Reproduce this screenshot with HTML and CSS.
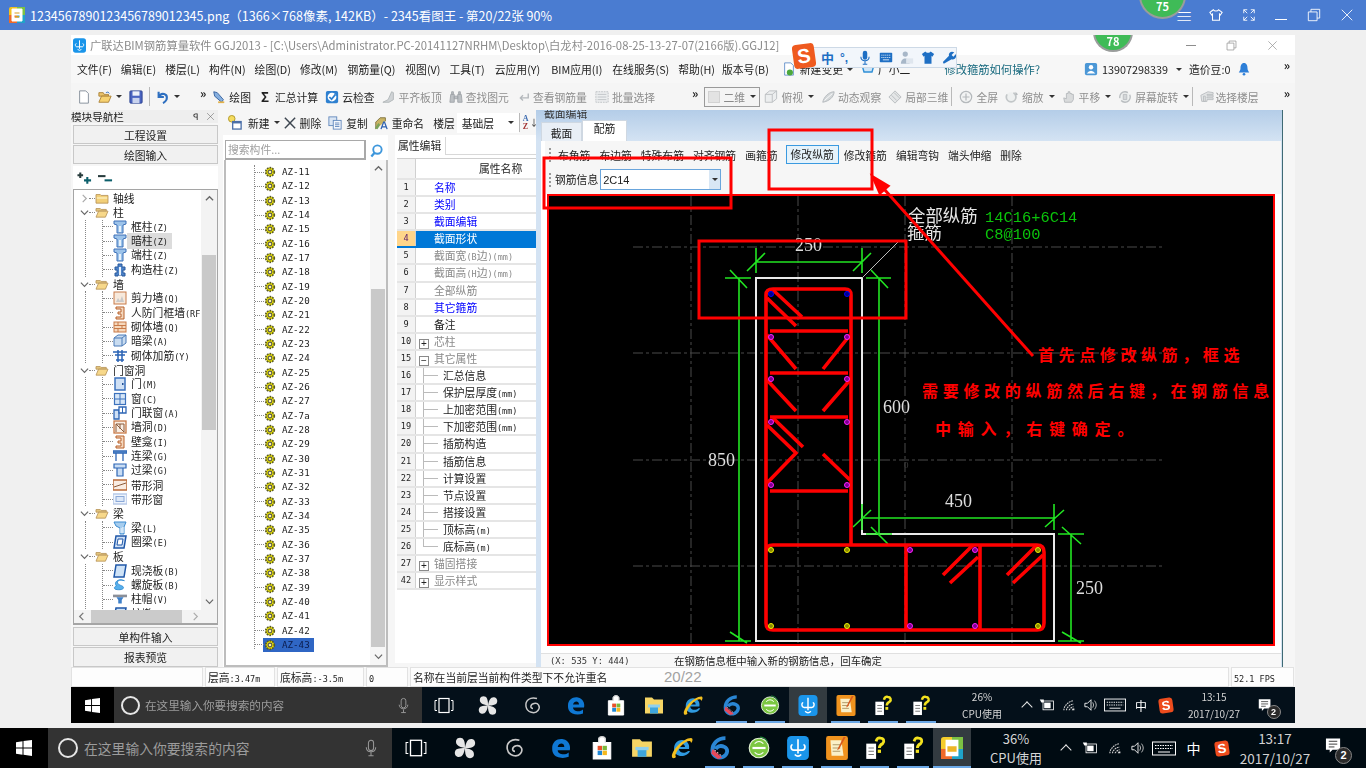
FILE: index.html
```html
<!DOCTYPE html>
<html lang="zh-CN">
<head>
<meta charset="utf-8">
<title>2345看图王</title>
<link rel="stylesheet" href="styles.css">
</head>
<body>
<svg class="sprite" width="0" height="0" aria-hidden="true"><defs>
<symbol id="viewer" viewBox="0 0 16 16"><rect x="0" y="0" width="16" height="16" rx="2" fill="#f3c21f"/><rect x="0" y="8" width="8" height="8" fill="#ee6a2a"/><rect x="8" y="8" width="8" height="8" fill="#1fa3c9"/><rect x="8" y="0" width="8" height="8" fill="#7cc243"/><path d="M3 2v12h10V2M3 2h10M5 5h6M5 8h6v3H5z" fill="#fff" stroke="#fff"/><path d="M5.500 5.500h5v1h-5zM6 9h4v1.500H6z" fill="#d8a020"/></symbol>
<symbol id="folder" viewBox="0 0 16 14"><path d="M1 3h5l1 1h8v9H1z" fill="#f2cf78" stroke="#b8955a"/><path d="M2 6h12v2H2z" fill="#fbe9b0"/></symbol>
<symbol id="folderopen" viewBox="0 0 16 14"><path d="M1 3h5l1 1h6v2H1z" fill="#e6c87e" stroke="#b8955a"/><path d="M1 13l3-7h11l-3 7z" fill="#f7d88a" stroke="#b8955a"/></symbol>
<symbol id="col" viewBox="0 0 14 14"><path d="M1 1h12v3l-3 1v8H4V5L1 4z" fill="#9cc3ea" stroke="#3d70b8"/><path d="M6 6h2v6H6z" fill="#e8f2fb"/></symbol>
<symbol id="colx" viewBox="0 0 14 14"><path d="M5 1h4v3h3v3h-2v3h2v3H9v-1H5v1H2v-3h2V7H2V4h3z" fill="#4d82c8" stroke="#2b5a9d"/><path d="M6 4h2v8H6z" fill="#e8f2fb"/></symbol>
<symbol id="wall" viewBox="0 0 14 14"><rect x="1" y="1" width="12" height="12" fill="#f7e9dc" stroke="#c87a48"/><path d="M3 11l2-4 2 3 2-5 2 6z" fill="#c9c9c9"/></symbol>
<symbol id="frame" viewBox="0 0 14 14"><path d="M3 1h8v12H3v-2h5V8H5V6h3V3H3z" fill="#f4d7bd" stroke="#b8602a"/></symbol>
<symbol id="brick" viewBox="0 0 14 14"><rect x="1" y="2" width="12" height="10" fill="#f6d8bc" stroke="#c87a48"/><path d="M1 5.500h12M1 8.500h12M5 2v3.500M9 5.500v3M5 8.500V12" stroke="#c87a48" fill="none"/></symbol>
<symbol id="beam3d" viewBox="0 0 14 14"><path d="M1 4l4-3h8v8l-4 3H1z" fill="#c9dcf0" stroke="#4b7bb8"/><path d="M1 4h8v8M9 4l4-3" fill="none" stroke="#4b7bb8"/></symbol>
<symbol id="rebar" viewBox="0 0 14 14"><path d="M0 3h14M2 6h10M5 1v12M9 1v12M3 11h8" stroke="#2a63b5" stroke-width="1.500" fill="none"/></symbol>
<symbol id="door" viewBox="0 0 14 14"><rect x="2" y="1" width="10" height="12" fill="#cfe0f5" stroke="#3c72bd" stroke-width="1.500"/><rect x="9" y="6" width="1.500" height="2" fill="#1f4f96"/></symbol>
<symbol id="win" viewBox="0 0 14 14"><rect x="1.500" y="1.500" width="11" height="11" fill="#d6e6f7" stroke="#3c72bd" stroke-width="1.200"/><path d="M7 1.500v11M1.500 7h11" stroke="#3c72bd"/></symbol>
<symbol id="dw" viewBox="0 0 14 14"><path d="M1 4h5v9H1z" fill="#cfe0f5" stroke="#2e66b5" stroke-width="1.300"/><path d="M6 1h7v6H6z" fill="#fff" stroke="#2e66b5" stroke-width="1.300"/><path d="M9.500 1v6" stroke="#2e66b5"/></symbol>
<symbol id="hole" viewBox="0 0 14 14"><rect x="1" y="1" width="12" height="12" fill="#f9eee4" stroke="#c87a48" stroke-width="1.300"/><path d="M3 12V4h8v8M3 4l8 8M7 4v5" fill="none" stroke="#8a5a3a"/></symbol>
<symbol id="lbeam" viewBox="0 0 14 14"><path d="M0 2h14v2H0zM3 4v8M10 4v8" fill="#8fb8e6" stroke="#2e66b5" stroke-width="1.300"/></symbol>
<symbol id="tbeam" viewBox="0 0 14 14"><path d="M1 1h12v4H1zM4 5h6v8H4z" fill="#c9ddf4" stroke="#2e66b5" stroke-width="1.200"/></symbol>
<symbol id="band" viewBox="0 0 14 14"><rect x="0" y="2" width="14" height="10" fill="#f9ece2" stroke="#b96a38" stroke-width="1.500"/><path d="M1 9l12-4" stroke="#8a5a3a"/></symbol>
<symbol id="bandw" viewBox="0 0 14 14"><rect x="0" y="2" width="14" height="10" fill="#eef4fc" stroke="#b7c9e8" stroke-width="1.500"/><rect x="3" y="4.500" width="8" height="5" fill="#dbe7f7" stroke="#8aa8d8"/></symbol>
<symbol id="beam" viewBox="0 0 14 14"><path d="M1 1h12l-2 5v7H7V7L3 5z" fill="#a6cdee" stroke="#3b8bd0"/><path d="M8 7v5M10 6v6" stroke="#fff"/></symbol>
<symbol id="ring" viewBox="0 0 14 14"><path d="M3 1h10l-2 12H1z" fill="#cfe0f5" stroke="#1f57a8" stroke-width="1.500"/><path d="M5 4h5l-1 6H4z" fill="#fff" stroke="#1f57a8"/></symbol>
<symbol id="slab" viewBox="0 0 14 14"><path d="M3 1h10l-2 12H1z" fill="#cfe3f7" stroke="#1f57a8" stroke-width="1.500"/></symbol>
<symbol id="spiral" viewBox="0 0 16 14"><path d="M13 2C7 0 3 3 6 6c3 2 6 2 6 4s-4 3-9 2C1 11 1 9 4 8c-3-3 0-7 5-7z" fill="#58b0ec" stroke="#2e8ad0"/></symbol>
<symbol id="cap" viewBox="0 0 16 14"><path d="M0 2h16v3H0z" fill="#8a8f98"/><path d="M4 5h8l-2 3v4H6V8z" fill="#3d7fc9"/></symbol>
<symbol id="gear" viewBox="0 0 14 14"><circle cx="7" cy="7" r="5" fill="#e7df00" stroke="#5a5a20" stroke-width="2" stroke-dasharray="2 1.200"/><circle cx="7" cy="7" r="2.200" fill="#fff7a0" stroke="#555" stroke-width="1.300"/></symbol>
<symbol id="page" viewBox="0 0 14 16"><path d="M2 1h7l3 3v11H2z" fill="#fff" stroke="#7d8794"/></symbol>
<symbol id="open" viewBox="0 0 16 16"><path d="M1 3h5l1 2h5v2H1z" fill="#e9c36c" stroke="#a97f32"/><path d="M1 14l3-7h11l-3 7z" fill="#f6d272" stroke="#a97f32"/><path d="M9 3q3-2 4 1" fill="none" stroke="#3a76c4"/></symbol>
<symbol id="save" viewBox="0 0 16 16"><rect x="1" y="1" width="14" height="14" rx="1" fill="#4a64c0" stroke="#283f8e"/><rect x="4" y="1.500" width="8" height="5" fill="#eef2fa"/><rect x="4" y="9" width="8" height="6" fill="#c9d3ee"/></symbol>
<symbol id="undo" viewBox="0 0 16 16"><path d="M3 2v6h6M3 8c3-6 11-4 9 3-1 2-2 3-4 4" fill="none" stroke="#2e6fc0" stroke-width="2.400"/></symbol>
<symbol id="draw" viewBox="0 0 16 16"><path d="M2 2l4 1 7 8-2 3-8-7z" fill="#85aede" stroke="#2f5d9c"/><path d="M7 13h7v2H7z" fill="#e2b04a"/></symbol>
<symbol id="cloud" viewBox="0 0 16 16"><rect x="1" y="1" width="14" height="14" rx="2" fill="#2e80d0"/><circle cx="8" cy="8" r="5" fill="#fff"/><path d="M5 8l2.500 2.500L12 5" fill="none" stroke="#2e80d0" stroke-width="2"/></symbol>
<symbol id="g-align" viewBox="0 0 16 16"><path d="M1 14l6-3 4-9 2 1v8l-5 3z" fill="#cfd3d6" stroke="#aeb3b6"/></symbol>
<symbol id="g-find" viewBox="0 0 16 16"><path d="M2 5h4v9H1zM10 5h4l1 9h-5zM6 7h4v3H6zM3 2h2v3H3zM11 2h2v3h-2z" fill="#bcc0c4" stroke="#9fa4a8"/></symbol>
<symbol id="g-view" viewBox="0 0 16 16"><path d="M14 4v5H6M8 6L5 9l3 3" fill="none" stroke="#b4b8bc" stroke-width="1.600"/></symbol>
<symbol id="g-batch" viewBox="0 0 16 16"><rect x="1" y="2" width="14" height="12" fill="#eceeef" stroke="#b9bdc0" stroke-dasharray="2 1"/><path d="M3 5h10M3 8h10M3 11h10" stroke="#bcc0c3"/></symbol>
<symbol id="g-box" viewBox="0 0 16 16"><path d="M2 5l5-4h8v9l-5 4H2zM2 5h8v9M10 5l5-4" fill="#eceeef" stroke="#b8bcbf"/></symbol>
<symbol id="g-orbit" viewBox="0 0 16 16"><path d="M2 14C3 8 9 2 15 2c0 6-6 11-13 12z" fill="#d2d6d8" stroke="#b3b8bb"/><path d="M4 12l9-8" stroke="#fff"/></symbol>
<symbol id="g-local" viewBox="0 0 16 16"><path d="M8 1l7 7-7 7-7-7z" fill="#e4e6e7" stroke="#b5b9bc"/><path d="M4 6l6 6M7 3l6 6" stroke="#b5b9bc"/></symbol>
<symbol id="g-full" viewBox="0 0 16 16"><circle cx="8" cy="8" r="6.500" fill="#f2f3f3" stroke="#b5b9bc" stroke-width="1.400"/><path d="M8 4v8M4 8h8" stroke="#b5b9bc" stroke-width="1.400"/></symbol>
<symbol id="g-zoom" viewBox="0 0 16 16"><circle cx="7" cy="8" r="5.500" fill="#eef0f0" stroke="#c2c6c8" stroke-width="2" stroke-dasharray="20 8"/><path d="M12 2l3 3-3 1z" fill="#b5b9bc"/></symbol>
<symbol id="g-pan" viewBox="0 0 16 16"><path d="M3 14l-1-5 3 1V4h2V2h2v2h2v1h2v6l-2 3z" fill="#d9dbdc" stroke="#b3b7ba"/></symbol>
<symbol id="g-rot" viewBox="0 0 16 16"><circle cx="8" cy="8" r="6" fill="#eef0f0" stroke="#b8bcbf" stroke-width="1.500" stroke-dasharray="14 3"/><path d="M6 5h4v6H6z" fill="#d4d7d9" stroke="#b8bcbf"/></symbol>
<symbol id="g-floor" viewBox="0 0 16 16"><path d="M1 6l8-4 6 1v2H8v1h7v2H8v1h7v2H8v2H2zM4 7h2v6H4z" fill="#e2e4e5" stroke="#b8bcbf"/></symbol>
<symbol id="newitem" viewBox="0 0 18 16"><circle cx="5" cy="4" r="3.500" fill="#f5dc5f" stroke="#b0982a"/><rect x="6" y="7" width="9" height="8" fill="#fff" stroke="#4a6fa8" stroke-width="1.400"/><path d="M6 7h9v2H6z" fill="#4a6fa8"/></symbol>
<symbol id="cross" viewBox="0 0 14 14"><path d="M1 1l12 12M13 1L1 13" stroke="#3d4650" stroke-width="1.700"/></symbol>
<symbol id="copy" viewBox="0 0 16 16"><rect x="1" y="1" width="9" height="10" fill="#dbe6f4" stroke="#5e86bb"/><rect x="6" y="5" width="9" height="10" fill="#f3f7fc" stroke="#5e86bb"/><path d="M8 8h5M8 10h5M8 12h5" stroke="#5e86bb"/></symbol>
<symbol id="rename" viewBox="0 0 16 16"><path d="M2 15V7l5-5h6v4" fill="#c9b465" stroke="#7c6e3a"/><path d="M1 14l4-6 2 2-3 5z" fill="#7aa35a"/><path d="M8 15l3-8h1l3 8M9.500 12.500h4" fill="none" stroke="#2f62b0" stroke-width="1.500"/></symbol>
<symbol id="plusplus" viewBox="0 0 16 14"><path d="M3.500 1v6M.500 4h6" stroke="#273b3c" stroke-width="2.200"/><path d="M11 6v7M7.500 9.500h7.500" stroke="#0c5f6b" stroke-width="2.200"/></symbol>
<symbol id="minusminus" viewBox="0 0 16 14"><path d="M0 5h8" stroke="#273b3c" stroke-width="2.200"/><path d="M7 9.500h8" stroke="#0c5f6b" stroke-width="2.200"/></symbol>
<symbol id="search" viewBox="0 0 16 16"><circle cx="9" cy="7" r="4.500" fill="none" stroke="#3e97dc" stroke-width="2"/><path d="M6 10.500l-3.500 4" stroke="#3e97dc" stroke-width="2.400"/></symbol>
<symbol id="chr" viewBox="0 0 10 10"><path d="M3 1l4 4-4 4" fill="none" stroke="#aaa" stroke-width="1.300"/></symbol>
<symbol id="chl" viewBox="0 0 10 10"><path d="M7 1L3 5l4 4" fill="none" stroke="#777" stroke-width="1.400"/></symbol>
<symbol id="chd" viewBox="0 0 10 10"><path d="M1 3l4 4 4-4" fill="none" stroke="#666" stroke-width="1.300"/></symbol>
<symbol id="chu" viewBox="0 0 10 10"><path d="M1 7l4-4 4 4" fill="none" stroke="#666" stroke-width="1.400"/></symbol>
<symbol id="change" viewBox="0 0 14 16"><path d="M2 1h7l3 3v11H2z" fill="#fff" stroke="#5f8ec9"/><circle cx="8" cy="12" r="3.500" fill="#4ca83c"/></symbol>
<symbol id="cart" viewBox="0 0 14 14"><path d="M1 3h12l-2 7H3zM4 3q3-3 6 0" fill="#cfe5f7" stroke="#2f8fd6" stroke-width="1.400"/></symbol>
<symbol id="user" viewBox="0 0 14 16"><rect x="0" y="1" width="14" height="14" rx="2" fill="#4b97d6"/><circle cx="7" cy="6" r="2.500" fill="#fff"/><path d="M2 13q5-6 10 0z" fill="#fff"/></symbol>
<symbol id="bell" viewBox="0 0 14 16"><path d="M7 1c3 0 4 3 4 6 0 2 1 3 2 5H1c1-2 2-3 2-5 0-3 1-6 4-6z" fill="#2e7fd8"/><circle cx="7" cy="14" r="1.500" fill="#2e7fd8"/></symbol>
<symbol id="shirt" viewBox="0 0 16 16"><path d="M5 2L1 5l2 3 1-1v7h8V7l1 1 2-3-4-3c-1 2-5 2-6 0z" fill="none" stroke="currentColor" stroke-width="1.200"/></symbol>
<symbol id="shirtf" viewBox="0 0 16 16"><path d="M5 1L1 4l2 3 1-1v9h8V6l1 1 2-3-4-3c-1 2-5 2-6 0z" fill="#1e6fc4"/></symbol>
<symbol id="expand" viewBox="0 0 16 16"><path d="M2 2l4 4M14 2l-4 4M2 14l4-4M14 14l-4-4M2 6V2h4M10 2h4v4M2 10v4h4M14 10v4h-4" fill="none" stroke="currentColor"/></symbol>
<symbol id="restore" viewBox="0 0 16 16"><path d="M1.500 4.500h10v10h-10zM4.500 4.500v-3h10v10h-3" fill="none" stroke="currentColor"/></symbol>
<symbol id="close" viewBox="0 0 16 16"><path d="M2 2l12 12M14 2L2 14" stroke="currentColor"/></symbol>
<symbol id="mic" viewBox="0 0 14 20"><rect x="4" y="1" width="6" height="12" rx="3" fill="none" stroke="currentColor" stroke-width="1.200"/><path d="M1.500 9c0 7 11 7 11 0M7 15v4M4 19h6" fill="none" stroke="currentColor" stroke-width="1.200"/></symbol>
<symbol id="micf" viewBox="0 0 14 20"><rect x="4" y="1" width="6" height="12" rx="3" fill="#1e6fc4"/><path d="M1.500 9c0 7 11 7 11 0M7 15v4M4 19h6" fill="none" stroke="#1e6fc4" stroke-width="1.400"/></symbol>
<symbol id="kbf" viewBox="0 0 18 14"><rect x="1" y="1" width="16" height="12" rx="1" fill="#1e6fc4"/><path d="M3 4h12M3 7h12" stroke="#fff" stroke-dasharray="1.500 1"/><path d="M5 10h8" stroke="#fff"/></symbol>
<symbol id="person" viewBox="0 0 16 16"><circle cx="6" cy="4" r="3" fill="#a7b7c8"/><path d="M1 15c0-8 10-8 10 0z" fill="#a7b7c8"/><rect x="7" y="9" width="8" height="6" fill="#dfe6ee"/></symbol>
<symbol id="wrench" viewBox="0 0 16 16"><path d="M2 15l-1-2 7-7c-1-3 2-6 6-4l-3 3 2 2 3-3c1 4-2 7-5 6z" fill="#1e6fc4"/></symbol>
<symbol id="winlogo" viewBox="0 0 16 16"><path d="M0 2.300l6.500-1V7.500H0zM7.500 1.100L16 0v7.500H7.500zM0 8.500h6.500v6.200l-6.500-1zM7.500 8.500H16V16l-8.500-1.200z" fill="#fff"/></symbol>
<symbol id="taskview" viewBox="0 0 20 16"><rect x="5" y="1" width="10" height="14" fill="none" stroke="#fff" stroke-width="1.200"/><path d="M3 3H1v10h2M17 3h2v10h-2" fill="none" stroke="#fff"/></symbol>
<symbol id="fan" viewBox="0 0 20 20"><path d="M10 10C4 9 1 7 2 3c1-3 6-3 7 0 1 2 1 5 1 7zM10 10c1-6 3-9 7-8 3 1 3 6 0 7-2 1-5 1-7 1zM10 10c6 1 9 3 8 7-1 3-6 3-7 0-1-2-1-5-1-7zM10 10c-1 6-3 9-7 8-3-1-3-6 0-7 2-1 5-1 7-1z" fill="#e6e6e6"/></symbol>
<symbol id="swirl" viewBox="0 0 20 20"><path d="M14 3C7 1 2 5 3 11s9 8 12 4 0-8-4-7-4 5-1 5" fill="none" stroke="#c8c8c8" stroke-width="1.500"/></symbol>
<symbol id="edge" viewBox="0 0 20 20"><path d="M2 10C2 4 7 1 12 2c5 1 7 6 6 10H7c0 4 7 5 10 2v4c-5 2-12 1-14-3-1-2-1-3-1-5zm5-1h6c0-4-5-4-6 0z" fill="#0f78d4"/></symbol>
<symbol id="store" viewBox="0 0 20 22"><path d="M2 6h16v15H2zM7 6V3c0-3 6-3 6 0v3" fill="#fff" stroke="#fff"/><path d="M7 6V3c0-3 6-3 6 0v3" fill="none" stroke="#ccc"/><rect x="6" y="9" width="4" height="4" fill="#e8502a"/><rect x="10.500" y="9" width="4" height="4" fill="#7cb83a"/><rect x="6" y="13.500" width="4" height="4" fill="#1e88d8"/><rect x="10.500" y="13.500" width="4" height="4" fill="#f5b81e"/></symbol>
<symbol id="explorer" viewBox="0 0 20 20"><path d="M1 2h7l2 2h9v14H1z" fill="#f6d565"/><rect x="6" y="11" width="8" height="7" fill="#3ea5dc"/><rect x="4" y="9" width="12" height="3" fill="#8fd0ee"/></symbol>
<symbol id="ie" viewBox="0 0 22 22"><path d="M3 12C3 6 7 3 11 3c5 0 8 4 7 9H8c0 4 6 5 9 2h2c-3 7-16 7-16-2zm5-2h6c0-4-6-4-6 0z" fill="#2f9ae0"/><path d="M1 20C0 14 12 1 20 1c2 0 2 3 0 5 0-4-6-1-9 2-4 4-8 10-6 12-2 2-4 1-4 0z" fill="#f4c020"/></symbol>
<symbol id="six" viewBox="0 0 20 22"><path d="M15 2C8 2 3 7 3 13s6 8 10 6 5-7 1-9-7 0-8 2" fill="none" stroke="#2a86d4" stroke-width="3.500"/><path d="M3 12l9 8-4 1-6-5z" fill="#e8485a"/><path d="M5 13l6 5" stroke="#f7c0c8" stroke-dasharray="1.500 1.500"/></symbol>
<symbol id="greenapp" viewBox="0 0 20 22"><circle cx="10" cy="11" r="9" fill="#7cc742" stroke="#e6f3d8"/><path d="M4 11h12" stroke="#fff" stroke-width="2"/><path d="M6 7q4-4 8 0M6 15q4 4 8 0" fill="none" stroke="#fff"/><path d="M11 1q5 0 7 5" fill="none" stroke="#238b3a"/></symbol>
<symbol id="blueapp" viewBox="0 0 20 22"><rect x="0" y="0" width="20" height="22" rx="4" fill="#1a95ea"/><path d="M10 3v13M5 8c-2 0-2 5 1 5h8c3 0 3-5 1-5M7 17q3 3 6 0" fill="none" stroke="#fff" stroke-width="1.500"/></symbol>
<symbol id="notes" viewBox="0 0 20 22"><rect x="0" y="0" width="20" height="22" rx="2" fill="#f0931e"/><path d="M4 4h10l2 14H5z" fill="#faf0c8"/><path d="M6 8h7M6 11h7M6 14h7" stroke="#b09a6a"/><path d="M16 1l-5 10-1 2 2-1 6-11z" fill="#d75a1e"/></symbol>
<symbol id="qdoc" viewBox="0 0 20 22"><rect x="2" y="7" width="9" height="14" fill="#fff"/><path d="M4 11h5M4 14h5M4 17h5" stroke="#777"/><path d="M11 5q1-4 4-3c3 0 4 3 2 5-2 1-3 2-3 4" fill="none" stroke="#f3e21e" stroke-width="2.600"/><rect x="12.500" y="12.500" width="3" height="3" fill="#f3e21e"/></symbol>
<symbol id="viewerbig" viewBox="0 0 24 24"><rect width="24" height="24" rx="3" fill="#f5cd2a"/><rect y="13" width="12" height="11" fill="#ee6a2a"/><rect x="12" y="13" width="12" height="11" fill="#1fa3c9"/><rect x="12" width="12" height="13" fill="#7cc243"/><rect x="5" y="3" width="14" height="18" fill="#fff"/><path d="M7 7h10M7 10h10v6H7z" fill="#eeb526"/></symbol>
<symbol id="plug" viewBox="0 0 20 16"><rect x="5" y="3" width="13" height="11" fill="none" stroke="#fff"/><rect x="6.500" y="5" width="8" height="7" fill="#fff"/><path d="M1 1h5v4H3z" fill="#fff"/></symbol>
<symbol id="wifi" viewBox="0 0 18 16"><path d="M2 14C2 9 7 4 13 3M5 14c0-3 4-7 8-7M8 14c0-1 3-4 5-4" fill="none" stroke="#ccc" stroke-width="1.300" stroke-dasharray="2 .8"/><path d="M11 14h3V12h-2z" fill="#ddd"/></symbol>
<symbol id="speaker" viewBox="0 0 16 16"><path d="M1 6h3l4-4v12l-4-4H1z" fill="none" stroke="#fff"/><path d="M10 5q2 3 0 6M12 3q4 5 0 10" fill="none" stroke="#ccc"/></symbol>
<symbol id="keyboard" viewBox="0 0 24 16"><rect x=".5" y="1.500" width="23" height="13" fill="none" stroke="#fff"/><path d="M3 5h18M3 8h18" stroke="#fff" stroke-dasharray="1.500 1"/><path d="M6 11.500h12" stroke="#fff"/></symbol>
<symbol id="notify" viewBox="0 0 18 18"><path d="M1 1h15v12H8l-3 3v-3H1z" fill="#fff"/><path d="M4 4h9M4 7h9M4 10h6" stroke="#333"/></symbol>
</defs></svg>

<header class="viewer-title">
  <svg class="vt-logo"><use href="#viewer"/></svg>
  <span class="vt-text">1234567890123456789012345.png（1366×768像素, 142KB）- 2345看图王 - 第20/22张 90%</span>
  <div class="vt-controls">
    <span class="vt-menu">≡</span>
    <svg class="vt-ic"><use href="#shirt"/></svg>
    <svg class="vt-ic"><use href="#expand"/></svg>
    <span class="vt-min"></span>
    <svg class="vt-ic"><use href="#restore"/></svg>
    <svg class="vt-ic"><use href="#close"/></svg>
  </div>
</header>
<div class="badge badge-outer">75</div>

<main class="stage">
  <section class="win">
    <div class="badge badge-inner">78</div>
    <div class="win-title">
      <svg class="wt-logo"><use href="#blueapp"/></svg>
      <span class="wt-text">广联达BIM钢筋算量软件 GGJ2013 - [C:\Users\Administrator.PC-20141127NRHM\Desktop\白龙村-2016-08-25-13-27-07(2166版).GGJ12]</span>
      <div class="wt-controls">
        <span class="wt-min"></span>
        <svg class="wt-ic"><use href="#restore"/></svg>
        <svg class="wt-ic"><use href="#close"/></svg>
      </div>
    </div>
    <nav class="win-menu">
      <span class="mi">文件(F)</span><span class="mi">编辑(E)</span><span class="mi">楼层(L)</span><span class="mi">构件(N)</span><span class="mi">绘图(D)</span><span class="mi">修改(M)</span><span class="mi mi-s1">钢筋量(Q)</span><span class="mi mi-s1">视图(V)</span><span class="mi">工具(T)</span><span class="mi mi-s1">云应用(Y)</span><span class="mi mi-s2">BIM应用(I)</span><span class="mi mi-s1">在线服务(S)</span><span class="mi">帮助(H)</span><span class="mi mi-ver">版本号(B)</span>
      <svg class="ti ti-change"><use href="#change"/></svg><span class="mi mi-change">新建变更</span><span class="caret"></span>
      <svg class="ti ti-cart"><use href="#cart"/></svg><span class="mi mi-xiao">广小二</span>
      <span class="mi mi-help">修改箍筋如何操作?</span>
      <svg class="ti ti-user"><use href="#user"/></svg><span class="mi mi-phone">13907298339</span><span class="caret"></span>
      <span class="mi mi-bean">造价豆:0</span>
      <svg class="ti ti-bell"><use href="#bell"/></svg>
      <span class="more more-menu">»</span>
    </nav>
    <div class="win-tools">
      <svg class="ti"><use href="#page"/></svg>
      <svg class="ti ti-open"><use href="#open"/></svg><span class="caret"></span>
      <svg class="ti ti-save"><use href="#save"/></svg>
      <span class="tsep"></span>
      <svg class="ti"><use href="#undo"/></svg><span class="caret"></span>
      <span class="more more-a">»</span>
      <span class="tb tb-draw"><svg class="ti"><use href="#draw"/></svg>绘图</span>
      <span class="tb"><span class="sigma">Σ</span>汇总计算</span>
      <span class="tb"><svg class="ti"><use href="#cloud"/></svg>云检查</span>
      <span class="tb off"><svg class="ti"><use href="#g-align"/></svg>平齐板顶</span>
      <span class="tb off"><svg class="ti"><use href="#g-find"/></svg>查找图元</span>
      <span class="tb off"><svg class="ti"><use href="#g-view"/></svg>查看钢筋量</span>
      <span class="tb off tb-batch"><svg class="ti"><use href="#g-batch"/></svg>批量选择</span>
      <span class="more more-b">»</span>
      <span class="combo2d"><span class="sq"></span>二维<span class="caret"></span></span>
      <span class="tb off tb-top"><svg class="ti"><use href="#g-box"/></svg>俯视<span class="caret"></span></span>
      <span class="tb off"><svg class="ti"><use href="#g-orbit"/></svg>动态观察</span>
      <span class="tb off tb-end"><svg class="ti"><use href="#g-local"/></svg>局部三维</span>
      <span class="tsep tsep-r"></span>
      <span class="tb off"><svg class="ti"><use href="#g-full"/></svg>全屏</span>
      <span class="tb off"><svg class="ti"><use href="#g-zoom"/></svg>缩放<span class="caret"></span></span>
      <span class="tb off"><svg class="ti"><use href="#g-pan"/></svg>平移<span class="caret"></span></span>
      <span class="tb off tb-end"><svg class="ti"><use href="#g-rot"/></svg>屏幕旋转<span class="caret"></span></span>
      <span class="tsep tsep-r"></span>
      <span class="tb off tb-floor"><svg class="ti"><use href="#g-floor"/></svg>选择楼层</span>
      <span class="more more-end">»</span>
    </div>

    <div class="win-body">
      <aside class="nav">
        <div class="nav-head"><span>模块导航栏</span><span class="nav-pin">ꟼ</span><svg class="nav-x"><use href="#close"/></svg></div>
        <button class="nav-btn nav-btn-first">工程设置</button>
        <button class="nav-btn">绘图输入</button>
        <div class="nav-tools"><svg class="pm"><use href="#plusplus"/></svg><svg class="pm"><use href="#minusminus"/></svg></div>
        <div class="tree-box">
          <div class="tree-main">
            <div class="tree">
              <div class="node"><svg class="chev"><use href="#chr"/></svg><span class="dash"></span><svg class="fold"><use href="#folder"/></svg><span>轴线</span></div>
              <div class="node"><svg class="chev"><use href="#chd"/></svg><span class="dash"></span><svg class="fold"><use href="#folderopen"/></svg><span>柱</span></div>
              <div class="kids"><div class="sub">
                <div class="leaf"><span class="dash"></span><svg class="li"><use href="#col"/></svg><span>框柱<span class="m">(Z)</span></span></div>
                <div class="leaf"><span class="dash"></span><svg class="li"><use href="#col"/></svg><span class="hl">暗柱<span class="m">(Z)</span></span></div>
                <div class="leaf"><span class="dash"></span><svg class="li"><use href="#col"/></svg><span>端柱<span class="m">(Z)</span></span></div>
                <div class="leaf"><span class="dash"></span><svg class="li"><use href="#colx"/></svg><span>构造柱<span class="m">(Z)</span></span></div>
              </div></div>
              <div class="node"><svg class="chev"><use href="#chd"/></svg><span class="dash"></span><svg class="fold"><use href="#folderopen"/></svg><span>墙</span></div>
              <div class="kids"><div class="sub">
                <div class="leaf"><span class="dash"></span><svg class="li"><use href="#wall"/></svg><span>剪力墙<span class="m">(Q)</span></span></div>
                <div class="leaf"><span class="dash"></span><svg class="li"><use href="#frame"/></svg><span>人防门框墙<span class="m">(RF</span></span></div>
                <div class="leaf"><span class="dash"></span><svg class="li"><use href="#brick"/></svg><span>砌体墙<span class="m">(Q)</span></span></div>
                <div class="leaf"><span class="dash"></span><svg class="li"><use href="#beam3d"/></svg><span>暗梁<span class="m">(A)</span></span></div>
                <div class="leaf"><span class="dash"></span><svg class="li"><use href="#rebar"/></svg><span>砌体加筋<span class="m">(Y)</span></span></div>
              </div></div>
              <div class="node"><svg class="chev"><use href="#chd"/></svg><span class="dash"></span><svg class="fold"><use href="#folderopen"/></svg><span>门窗洞</span></div>
              <div class="kids"><div class="sub">
                <div class="leaf"><span class="dash"></span><svg class="li"><use href="#door"/></svg><span>门<span class="m">(M)</span></span></div>
                <div class="leaf"><span class="dash"></span><svg class="li"><use href="#win"/></svg><span>窗<span class="m">(C)</span></span></div>
                <div class="leaf"><span class="dash"></span><svg class="li"><use href="#dw"/></svg><span>门联窗<span class="m">(A)</span></span></div>
                <div class="leaf"><span class="dash"></span><svg class="li"><use href="#hole"/></svg><span>墙洞<span class="m">(D)</span></span></div>
                <div class="leaf"><span class="dash"></span><svg class="li"><use href="#frame"/></svg><span>壁龛<span class="m">(I)</span></span></div>
                <div class="leaf"><span class="dash"></span><svg class="li"><use href="#lbeam"/></svg><span>连梁<span class="m">(G)</span></span></div>
                <div class="leaf"><span class="dash"></span><svg class="li"><use href="#tbeam"/></svg><span>过梁<span class="m">(G)</span></span></div>
                <div class="leaf"><span class="dash"></span><svg class="li"><use href="#band"/></svg><span>带形洞</span></div>
                <div class="leaf"><span class="dash"></span><svg class="li"><use href="#bandw"/></svg><span>带形窗</span></div>
              </div></div>
              <div class="node"><svg class="chev"><use href="#chd"/></svg><span class="dash"></span><svg class="fold"><use href="#folderopen"/></svg><span>梁</span></div>
              <div class="kids"><div class="sub">
                <div class="leaf"><span class="dash"></span><svg class="li"><use href="#beam"/></svg><span>梁<span class="m">(L)</span></span></div>
                <div class="leaf"><span class="dash"></span><svg class="li"><use href="#ring"/></svg><span>圈梁<span class="m">(E)</span></span></div>
              </div></div>
              <div class="node"><svg class="chev"><use href="#chd"/></svg><span class="dash"></span><svg class="fold"><use href="#folderopen"/></svg><span>板</span></div>
              <div class="kids"><div class="sub">
                <div class="leaf"><span class="dash"></span><svg class="li"><use href="#slab"/></svg><span>现浇板<span class="m">(B)</span></span></div>
                <div class="leaf"><span class="dash"></span><svg class="li"><use href="#spiral"/></svg><span>螺旋板<span class="m">(B)</span></span></div>
                <div class="leaf"><span class="dash"></span><svg class="li"><use href="#cap"/></svg><span>柱帽<span class="m">(V)</span></span></div>
                <div class="leaf"><span class="dash"></span><svg class="li"><use href="#slab"/></svg><span>柱墩<span class="m">(X)</span></span></div>
              </div></div>
            </div>
            <div class="vbar vbar-tree"><svg class="sb-arrow"><use href="#chu"/></svg><span class="thumb"></span><svg class="sb-arrow sb-end"><use href="#chd"/></svg></div>
          </div>
          <div class="hbar"><svg class="sb-arrow"><use href="#chl"/></svg><span class="hthumb"></span><svg class="sb-arrow"><use href="#chr"/></svg></div>
        </div>
        <button class="nav-btn nav-btn-low">单构件输入</button>
        <button class="nav-btn nav-btn-last">报表预览</button>
      </aside>

      <div class="mid">
        <div class="mid-tools">
          <svg class="ti ti-new"><use href="#newitem"/></svg><span class="mt">新建</span><span class="caret"></span>
          <svg class="ti ti-x"><use href="#cross"/></svg><span class="mt">删除</span>
          <svg class="ti ti-copy"><use href="#copy"/></svg><span class="mt">复制</span>
          <svg class="ti ti-ren"><use href="#rename"/></svg><span class="mt">重命名</span>
          <span class="mt mt-floor">楼层</span><span class="floor-combo">基础层<span class="caret"></span></span>
          <span class="tsep"></span><span class="az"><span class="az-a">A</span><span class="az-z">Z</span></span><span class="az-arrow">↓</span>
        </div>
        <div class="mid-panels">
          <div class="comp">
            <div class="comp-search"><span class="search-input">搜索构件...</span><svg class="search-ic"><use href="#search"/></svg></div>
            <div class="comp-list">
              <ul class="az-list">
                <li><svg class="gear"><use href="#gear"/></svg>AZ-11</li><li><svg class="gear"><use href="#gear"/></svg>AZ-12</li><li><svg class="gear"><use href="#gear"/></svg>AZ-13</li><li><svg class="gear"><use href="#gear"/></svg>AZ-14</li><li><svg class="gear"><use href="#gear"/></svg>AZ-15</li><li><svg class="gear"><use href="#gear"/></svg>AZ-16</li><li><svg class="gear"><use href="#gear"/></svg>AZ-17</li><li><svg class="gear"><use href="#gear"/></svg>AZ-18</li><li><svg class="gear"><use href="#gear"/></svg>AZ-19</li><li><svg class="gear"><use href="#gear"/></svg>AZ-20</li><li><svg class="gear"><use href="#gear"/></svg>AZ-21</li><li><svg class="gear"><use href="#gear"/></svg>AZ-22</li><li><svg class="gear"><use href="#gear"/></svg>AZ-23</li><li><svg class="gear"><use href="#gear"/></svg>AZ-24</li><li><svg class="gear"><use href="#gear"/></svg>AZ-25</li><li><svg class="gear"><use href="#gear"/></svg>AZ-26</li><li><svg class="gear"><use href="#gear"/></svg>AZ-27</li><li><svg class="gear"><use href="#gear"/></svg>AZ-7a</li><li><svg class="gear"><use href="#gear"/></svg>AZ-28</li><li><svg class="gear"><use href="#gear"/></svg>AZ-29</li><li><svg class="gear"><use href="#gear"/></svg>AZ-30</li><li><svg class="gear"><use href="#gear"/></svg>AZ-31</li><li><svg class="gear"><use href="#gear"/></svg>AZ-32</li><li><svg class="gear"><use href="#gear"/></svg>AZ-33</li><li><svg class="gear"><use href="#gear"/></svg>AZ-34</li><li><svg class="gear"><use href="#gear"/></svg>AZ-35</li><li><svg class="gear"><use href="#gear"/></svg>AZ-36</li><li><svg class="gear"><use href="#gear"/></svg>AZ-37</li><li><svg class="gear"><use href="#gear"/></svg>AZ-38</li><li><svg class="gear"><use href="#gear"/></svg>AZ-39</li><li><svg class="gear"><use href="#gear"/></svg>AZ-40</li><li><svg class="gear"><use href="#gear"/></svg>AZ-41</li><li><svg class="gear"><use href="#gear"/></svg>AZ-42</li><li class="sel"><svg class="gear"><use href="#gear"/></svg><span>AZ-43</span></li>
              </ul>
              <div class="vbar vbar-comp"><svg class="sb-arrow"><use href="#chu"/></svg><span class="thumb"></span><svg class="sb-arrow sb-end"><use href="#chd"/></svg></div>
            </div>
          </div>
          <div class="prop">
            <div class="prop-tabs"><span class="prop-tab">属性编辑</span></div>
            <div class="prop-table">
              <div class="pr pr-head"><span class="pn"></span><span class="pv pv-head">属性名称</span></div>
              <div class="pr"><span class="pn">1</span><span class="pv blue">名称</span></div>
              <div class="pr"><span class="pn">2</span><span class="pv blue">类别</span></div>
              <div class="pr"><span class="pn">3</span><span class="pv blue">截面编辑</span></div>
              <div class="pr pr-sel"><span class="pn">4</span><span class="pv">截面形状</span></div>
              <div class="pr"><span class="pn">5</span><span class="pv gray">截面宽<span class="m">(B</span>边<span class="m">)(mm)</span></span></div>
              <div class="pr"><span class="pn">6</span><span class="pv gray">截面高<span class="m">(H</span>边<span class="m">)(mm)</span></span></div>
              <div class="pr"><span class="pn">7</span><span class="pv gray">全部纵筋</span></div>
              <div class="pr"><span class="pn">8</span><span class="pv blue">其它箍筋</span></div>
              <div class="pr"><span class="pn">9</span><span class="pv">备注</span></div>
              <div class="pr"><span class="pn">10</span><span class="pv pv-group gray"><span class="pm-box">+</span>芯柱</span></div>
              <div class="pr"><span class="pn">15</span><span class="pv pv-group gray"><span class="pm-box">−</span>其它属性</span></div>
              <div class="pr"><span class="pn">16</span><span class="pv pv-child">汇总信息</span></div>
              <div class="pr"><span class="pn">17</span><span class="pv pv-child">保护层厚度<span class="m">(mm)</span></span></div>
              <div class="pr"><span class="pn">18</span><span class="pv pv-child">上加密范围<span class="m">(mm)</span></span></div>
              <div class="pr"><span class="pn">19</span><span class="pv pv-child">下加密范围<span class="m">(mm)</span></span></div>
              <div class="pr"><span class="pn">20</span><span class="pv pv-child">插筋构造</span></div>
              <div class="pr"><span class="pn">21</span><span class="pv pv-child">插筋信息</span></div>
              <div class="pr"><span class="pn">22</span><span class="pv pv-child">计算设置</span></div>
              <div class="pr"><span class="pn">23</span><span class="pv pv-child">节点设置</span></div>
              <div class="pr"><span class="pn">24</span><span class="pv pv-child">搭接设置</span></div>
              <div class="pr"><span class="pn">25</span><span class="pv pv-child">顶标高<span class="m">(m)</span></span></div>
              <div class="pr"><span class="pn">26</span><span class="pv pv-child pv-last">底标高<span class="m">(m)</span></span></div>
              <div class="pr"><span class="pn">27</span><span class="pv pv-group gray"><span class="pm-box">+</span>锚固搭接</span></div>
              <div class="pr"><span class="pn">42</span><span class="pv pv-group gray"><span class="pm-box">+</span>显示样式</span></div>
            </div>
          </div>
        </div>
      </div>

      <div class="sect">
        <div class="sect-frame">
          <div class="sect-title">截面编辑</div>
          <div class="sect-tabs"><span class="stab">截面</span><span class="stab stab-on">配筋</span></div>
          <div class="sect-panel">
            <div class="rebar-tools">
              <span class="grip"></span>
              <span class="rt rt-first">布角筋</span><span class="rt">布边筋</span><span class="rt">特殊布筋</span><span class="rt">对齐钢筋</span><span class="rt">画箍筋</span><span class="rt rt-on">修改纵筋</span><span class="rt">修改箍筋</span><span class="rt">编辑弯钩</span><span class="rt">端头伸缩</span><span class="rt">删除</span>
            </div>
            <div class="rebar-info">
              <span class="grip"></span>
              <span class="ri-label">钢筋信息</span>
              <span class="ri-select"><span class="ri-val">2C14</span><span class="ri-btn"><span class="caret"></span></span></span>
            </div>
            <div class="canvas">
              <svg class="drawing" viewBox="549 196 724 448" preserveAspectRatio="none">
                <g class="grid-lines">
                  <path d="M633 247H1165M633 353H1165M633 460H1165M633 566H1165M691 196V644M798 196V644M905 196V644M1012 196V644"/>
                </g>
                <text class="origin" x="904" y="468">0</text>
                <path class="outline" d="M756 278H862V534H1054V641H756Z"/>
                <path class="leader" d="M862 278L900 240"/>
                <g class="dims">
                  <path d="M739 278V641M725 278H751M730 270L747 288M725 641H751M730 632L747 643"/>
                  <path d="M879 278V534M866 278H891M871 270L888 288M866 534H892M871 527L888 544"/>
                  <path d="M756 262H862M756 248V273M862 248V273M747 271L765 253M853 271L871 253"/>
                  <path d="M862 518H1054M862 504V530M1054 504V530M853 527L871 510M1045 527L1064 510"/>
                  <path d="M1071 534V641M1058 534H1084M1062 527L1081 544M1058 641H1084M1062 632L1081 643"/>
                </g>
                <g class="rebars">
                  <path d="M773 289H845Q851 289 851 295V545M766 295Q766 289 773 289M766 295V623Q766 630 773 630H1037Q1044 630 1044 623V552Q1044 545 1037 545H773Q766 545 766 552"/>
                  <path d="M770 331H848M770 373H848M770 417H848M770 491H848M906 545V630M980 545V630"/>
                  <path d="M767 298L796 326M773 290L802 317M767 335L796 369M850 335L823 369M767 380L796 411M850 380L823 411M773 418L803 447M767 425L796 453L767 483M823 454L850 480M943 575L973 545M950 583L978 557M1007 575L1037 545M1013 583L1043 555"/>
                </g>
                <g class="dot-b"><circle cx="771" cy="294" r="2.500"/><circle cx="847" cy="294" r="2.500"/></g>
                <g class="dot-m"><circle cx="771" cy="337" r="2.500"/><circle cx="847" cy="337" r="2.500"/><circle cx="771" cy="379" r="2.500"/><circle cx="847" cy="379" r="2.500"/><circle cx="771" cy="422" r="2.500"/><circle cx="847" cy="422" r="2.500"/><circle cx="771" cy="485" r="2.500"/><circle cx="847" cy="485" r="2.500"/><circle cx="910" cy="550" r="2.500"/><circle cx="975" cy="550" r="2.500"/><circle cx="910" cy="626" r="2.500"/><circle cx="975" cy="626" r="2.500"/></g>
                <g class="dot-y"><circle cx="771" cy="550" r="2.500"/><circle cx="847" cy="550" r="2.500"/><circle cx="771" cy="626" r="2.500"/><circle cx="847" cy="626" r="2.500"/><circle cx="1038" cy="550" r="2.500"/><circle cx="1038" cy="626" r="2.500"/></g>
                <text class="dim-t" x="795" y="251">250</text>
                <text class="dim-t" x="883" y="413">600</text>
                <text class="dim-t" x="708" y="466">850</text>
                <text class="dim-t" x="945" y="507">450</text>
                <text class="dim-t" x="1076" y="594">250</text>
                <text class="lbl-w" x="908" y="222">全部纵筋</text>
                <text class="lbl-w" x="907" y="239">箍筋</text>
                <text class="lbl-g" x="985" y="222">14C16+6C14</text>
                <text class="lbl-g" x="985" y="239">C8@100</text>
              </svg>
            </div>
            <div class="sect-status"><span class="ss-coord">(X: 535 Y: 444)</span><span class="ss-msg">在钢筋信息框中输入新的钢筋信息，回车确定</span></div>
          </div>
        </div>
      </div>
    </div>

    <footer class="win-status">
      <span class="st"></span>
      <span class="st">层高<span class="m">:3.47m</span></span>
      <span class="st">底标高<span class="m">:-3.5m</span></span>
      <span class="st"><span class="m">0</span></span>
      <span class="st">名称在当前层当前构件类型下不允许重名</span>
      <span class="st"><span class="m">52.1 FPS</span></span>
    </footer>

    <div class="taskbar tb-inner">
      <span class="t-start"><svg class="t-win"><use href="#winlogo"/></svg></span>
      <span class="t-search"><span class="ring"></span><span class="t-ph">在这里输入你要搜索的内容</span><svg class="t-mic"><use href="#mic"/></svg></span>
      <span class="tc"><svg class="ai"><use href="#taskview"/></svg></span>
      <span class="tc"><svg class="ai"><use href="#fan"/></svg></span>
      <span class="tc"><svg class="ai"><use href="#swirl"/></svg></span>
      <span class="tc"><svg class="ai"><use href="#edge"/></svg></span>
      <span class="tc"><svg class="ai"><use href="#store"/></svg></span>
      <span class="tc"><svg class="ai"><use href="#explorer"/></svg></span>
      <span class="tc"><svg class="ai"><use href="#ie"/></svg></span>
      <span class="tc run"><svg class="ai"><use href="#six"/></svg></span>
      <span class="tc run"><svg class="ai"><use href="#greenapp"/></svg></span>
      <span class="tc active"><svg class="ai"><use href="#blueapp"/></svg></span>
      <span class="tc run"><svg class="ai"><use href="#notes"/></svg></span>
      <span class="tc run"><svg class="ai"><use href="#qdoc"/></svg></span>
      <span class="tc run"><svg class="ai"><use href="#qdoc"/></svg></span>
      <span class="t-cpu"><span>26%</span><span>CPU使用</span></span>
      <span class="tc"><span class="up"></span></span>
      <span class="tc"><svg class="ci"><use href="#plug"/></svg></span>
      <span class="tc"><svg class="ci"><use href="#wifi"/></svg></span>
      <span class="tc"><svg class="ci"><use href="#speaker"/></svg></span>
      <span class="tc"><svg class="ci ci-kb"><use href="#keyboard"/></svg></span>
      <span class="tc t-zh">中</span>
      <span class="tc"><span class="s-logo">S</span></span>
      <span class="t-clock"><span>13:15</span><span>2017/10/27</span></span>
      <span class="tc t-note"><svg class="ci ci-note"><use href="#notify"/></svg><span class="note-badge">2</span></span>
    </div>
  </section>
  <div class="ime">
    <span class="ime-s">S</span>
    <span class="ime-zh">中</span><span class="ime-dot">°,</span>
    <svg class="ime-i"><use href="#micf"/></svg>
    <svg class="ime-i"><use href="#kbf"/></svg>
    <svg class="ime-i"><use href="#person"/></svg>
    <svg class="ime-i"><use href="#shirtf"/></svg>
    <svg class="ime-i"><use href="#wrench"/></svg>
  </div>
  <div class="page-count">20/22</div>
</main>

<div class="taskbar tb-outer">
  <span class="t-start"><svg class="t-win"><use href="#winlogo"/></svg></span>
  <span class="t-search"><span class="ring"></span><span class="t-ph">在这里输入你要搜索的内容</span><svg class="t-mic"><use href="#mic"/></svg></span>
  <span class="tc"><svg class="ai"><use href="#taskview"/></svg></span>
  <span class="tc"><svg class="ai"><use href="#fan"/></svg></span>
  <span class="tc"><svg class="ai"><use href="#swirl"/></svg></span>
  <span class="tc"><svg class="ai"><use href="#edge"/></svg></span>
  <span class="tc"><svg class="ai"><use href="#store"/></svg></span>
  <span class="tc"><svg class="ai"><use href="#explorer"/></svg></span>
  <span class="tc"><svg class="ai"><use href="#ie"/></svg></span>
  <span class="tc run"><svg class="ai"><use href="#six"/></svg></span>
  <span class="tc run"><svg class="ai"><use href="#greenapp"/></svg></span>
  <span class="tc run"><svg class="ai"><use href="#blueapp"/></svg></span>
  <span class="tc run"><svg class="ai"><use href="#notes"/></svg></span>
  <span class="tc run"><svg class="ai"><use href="#qdoc"/></svg></span>
  <span class="tc run"><svg class="ai"><use href="#qdoc"/></svg></span>
  <span class="tc active"><svg class="ai"><use href="#viewerbig"/></svg></span>
  <span class="t-cpu"><span>36%</span><span>CPU使用</span></span>
  <span class="tc"><span class="up"></span></span>
  <span class="tc"><svg class="ci"><use href="#plug"/></svg></span>
  <span class="tc"><svg class="ci"><use href="#wifi"/></svg></span>
  <span class="tc"><svg class="ci"><use href="#speaker"/></svg></span>
  <span class="tc"><svg class="ci ci-kb"><use href="#keyboard"/></svg></span>
  <span class="tc t-zh">中</span>
  <span class="tc"><span class="s-logo">S</span></span>
  <span class="t-clock"><span>13:17</span><span>2017/10/27</span></span>
  <span class="tc t-note"><svg class="ci ci-note"><use href="#notify"/></svg><span class="note-badge">2</span></span>
</div>

<svg class="anno" viewBox="0 0 1366 768" aria-label="标注">
  <g class="anno-lines">
    <rect x="544" y="158" width="187" height="50"/>
    <rect x="769" y="130" width="103" height="59"/>
    <rect x="699" y="241" width="207" height="77"/>
    <path d="M1033 356L876 180"/>
    <path class="anno-head" d="M873 177L888 186L880 193Z"/>
  </g>
  <text class="anno-t anno-t1" x="1038" y="361">首先点修改纵筋，框选</text>
  <text class="anno-t anno-t2" x="922" y="397">需要修改的纵筋然后右键，在钢筋信息</text>
  <text class="anno-t anno-t3" x="935" y="435">中输入，右键确定。</text>
</svg>
</body>
</html>
```
FILE: styles.css
```css
* { box-sizing: border-box; }
html, body { margin: 0; padding: 0; }
body {
  width: 1366px;
  height: 768px;
  overflow: hidden;
  position: relative;
  display: flex;
  flex-direction: column;
  background: #f0f0f0;
  font-family: "Noto Sans CJK SC", "Liberation Sans", sans-serif;
  font-size: 11px;
  color: #222;
}
.sprite { position: absolute; }
svg { display: block; flex: none; }
button { font: inherit; color: inherit; padding: 0; }

.m { font-family: "DejaVu Sans Mono", monospace; font-size: 8.5px; }

/* viewer title */
.viewer-title {
  height: 30px;
  flex: none;
  background: #4a7cd1;
  color: #fff;
  display: flex;
  align-items: center;
  padding-left: 9px;
}
.vt-logo { width: 16px; height: 16px; }
.vt-text { margin-left: 5px; font-size: 12.5px; white-space: nowrap; }
.vt-controls { margin-left: auto; display: flex; align-items: center; color: #fff; }
.vt-menu { width: 20px; font-size: 18px; text-align: center; margin-right: 15px; line-height: 1; font-weight: 300; }
.vt-ic { width: 14px; height: 14px; margin-right: 19px; }
.vt-min { width: 12px; height: 1px; background: #fff; margin: 8px 20px 0 0; }
.vt-controls .vt-ic:last-child { margin-right: 12px; }

.badge {
  position: absolute;
  border-radius: 50%;
  background: #3fbb57;
  border: 2px solid #9a9d9c;
  border-top: 0;
  color: #fff;
  font-weight: 700;
  text-align: center;
}
.badge-outer { left: 1139px; top: -28px; width: 47px; height: 47px; z-index: 3; font-size: 11px; line-height: 68px; }
.badge-inner { left: 1022px; top: -23px; width: 40px; height: 40px; z-index: 2; font-size: 11px; line-height: 58px; }

/* stage + window */
.stage {
  height: 698px;
  flex: none;
  padding: 5px 71px 0;
}
.win {
  width: 1224px;
  height: 688px;
  background: #f6f6f6;
  display: flex;
  flex-direction: column;
  position: relative;
  overflow: hidden;
  filter: blur(.3px);
}
.win-title {
  height: 20px;
  flex: none;
  background: #fff;
  display: flex;
  align-items: center;
  padding-left: 2px;
  color: #8b8b8b;
}
.wt-logo { width: 13px; height: 15px; }
.wt-text { margin-left: 4px; font-size: 11.3px; white-space: nowrap; }
.wt-controls { margin-left: auto; display: flex; align-items: center; color: #8d8d8d; }
.wt-min { width: 10px; height: 1px; background: #8d8d8d; margin-right: 30px; }
.wt-ic { width: 11px; height: 11px; margin-right: 30px; }
.wt-controls .wt-ic:last-child { margin-right: 17px; }

.win-menu {
  height: 28px;
  flex: none;
  background: #f7f7f7;
  display: flex;
  align-items: center;
  padding-left: 6px;
  position: relative;
}
.mi { margin-right: 9px; white-space: nowrap; font-size: 10.8px; }
.mi-s1 { margin-left: 1px; }
.mi-s2 { margin-left: 2px; }
.ti { width: 14px; height: 14px; }
.ti-change { margin-left: 4px; margin-right: 4px; }
.mi-change { margin-right: 0; }
.mi-ver { margin-left: -2px; }
.caret {
  display: inline-block;
  width: 0;
  height: 0;
  border: 3px solid transparent;
  border-top: 3px solid #333;
  border-bottom: 0;
  flex: none;
  margin: 0 4px;
}
.ti-cart { margin-left: 4px; margin-right: 3px; }
.mi-xiao { margin-right: 34px; }
.mi-help { color: #17697e; margin-right: 44px; font-size: 11.3px; }
.ti-user { margin-right: 4px; }
.mi-phone { margin-right: 4px; }
.mi-bean { margin-left: 3px; margin-right: 7px; }
.more { font-size: 12px; font-weight: 700; line-height: 1; flex: none; }
.more-menu { position: absolute; right: 5px; top: 4px; }

.win-tools {
  height: 27px;
  flex: none;
  background: #f5f5f5;
  display: flex;
  align-items: center;
  padding-left: 6px;
  font-size: 10.8px;
  position: relative;
}
.ti-open { margin-left: 7px; }
.ti-save { margin-left: 3px; }
.tsep { width: 1px; height: 19px; background: #b9b9b9; margin: 0 6px; flex: none; }
.tsep-r { margin: 0 7px 0 3px; }
.more-a { margin: -8px 6px 0 16px; }
.more-b { margin: -8px 6px 0 30px; }
.more-end { position: absolute; right: 5px; top: 4px; }
.tb { display: flex; flex: none; align-items: center; gap: 3px; margin-right: 7px; white-space: nowrap; }
.tb .caret { margin: 0 0 0 2px; }
.tb .ti { width: 14px; height: 14px; }
.tb-end { margin-right: 0; }
.tb-floor { gap: 1px; }
.off { color: #8e8e8e; }
.sigma { font-size: 13px; font-weight: 700; width: 14px; text-align: center; margin-left: 0; }
.tb-batch { margin-left: 1px; }
.combo2d {
  width: 56px;
  height: 20px;
  flex: none;
  border: 1px solid #9a9a9a;
  background: #f4f4f4;
  display: flex;
  align-items: center;
  padding-left: 3px;
  gap: 3px;
  color: #8a8a8a;
  margin-right: 3px;
  white-space: nowrap;
}
.combo2d .caret { margin-left: 2px; }
.sq { width: 12px; height: 12px; background: #e3e3e3; border: 1px solid #d2d2d2; flex: none; }
.tb-top .ti { width: 15px; }

/* main area */
.win-body { height: 557px; flex: none; display: flex; }

.nav { width: 147px; flex: none; display: flex; flex-direction: column; }
.nav-head { height: 13px; display: flex; align-items: center; justify-content: flex-start; background: #eeeeee; font-size: 10.6px; }
.nav-pin { margin-left: auto; font-size: 9px; }
.nav-x { width: 9px; height: 9px; margin: 0 3px 0 8px; color: #666; }
.nav-btn {
  height: 19px;
  margin: 1px 0 0 2px;
  background: #f1f1f1;
  border: 1px solid #c8c8c8;
  text-align: center;
  font-size: 10.8px;
  line-height: 16px;
}
.nav-btn-first { margin-top: 2px; }
.nav-btn-low { margin-top: 2px; }
.nav-btn-last { height: 20px; }
.nav-tools { height: 23px; margin: 2px 0 0 2px; background: #fff; display: flex; align-items: center; gap: 6px; padding-left: 4px; }
.pm { width: 15px; height: 14px; }
.tree-box { height: 436px; margin-left: 2px; border: 1px solid #a5a5a5; border-width: 1px 1px 2px; background: #fff; display: flex; flex-direction: column; }
.tree-main { flex: 1; min-height: 0; display: flex; padding-left: 0; }
.tree { flex: 1; overflow: hidden; padding-top: 1px; }
.node, .leaf { height: 14.33px; display: flex; align-items: center; white-space: nowrap; font-size: 10.8px; line-height: 14px; }
.chev { width: 9px; height: 9px; margin-left: 6px; }
.dash { width: 6px; border-top: 1px dotted #888; flex: none; }
.fold { width: 14px; height: 12px; margin-right: 4px; }
.kids { margin-left: 11px; border-left: 1px dotted #888; padding-left: 16px; }
.sub { border-left: 1px dotted #888; }
.leaf .dash { width: 10px; }
.li { width: 14px; height: 14px; margin-right: 4px; }
.hl { background: #dcdcdc; padding-right: 4px; margin-left: -4px; padding-left: 4px; }
.vbar { width: 16px; flex: none; background: #f3f3f3; display: flex; flex-direction: column; align-items: center; }
.sb-arrow { width: 9px; height: 9px; margin: 4px auto; }
.vbar .thumb { display: block; width: 14px; background: #c9c9c9; }
.vbar-tree .thumb { height: 175px; margin-top: 48px; }
.vbar-comp { background: #f6f6f6; }
.vbar-comp .thumb { height: 358px; margin-top: 112px; }
.sb-end { margin-top: auto; }
.hbar { height: 13px; background: #f3f3f3; display: flex; align-items: center; }
.hthumb { width: 91px; height: 13px; background: #cbcbcb; margin: 0 6px 0 2px; }
.hbar .sb-arrow { margin: 0 3px; }
.hbar .sb-arrow:last-child { margin-left: 3px; }

.mid { width: 313px; margin-left: 5px; flex: none; display: flex; flex-direction: column; }
.mid-tools { height: 25px; flex: none; display: flex; align-items: center; padding-left: 4px; font-size: 10.8px; }
.mt { white-space: nowrap; margin-left: 4px; }
.ti-new { width: 17px; height: 15px; }
.ti-x { margin-left: 0; width: 12px; height: 12px; }
.ti-copy { margin-left: 7px; }
.ti-ren { margin-left: 6px; }
.mt-floor { margin-left: 9px; }
.floor-combo { width: 62px; height: 20px; display: flex; align-items: center; background: #fff; padding-left: 5px; margin-left: 2px; flex: none; }
.floor-combo .caret { margin-left: 14px; }
.mid-tools .tsep { margin: 0 3px 0 0; }
.az { display: flex; flex-direction: column; font: 700 8px/8px "Liberation Serif", serif; }
.az-a { color: #3b6ab0; }
.az-z { color: #a03030; }
.az-arrow { font-size: 9px; margin-left: 1px; }
.mid-panels { flex: 1; min-height: 0; display: flex; }
.comp { width: 165px; flex: none; background: #fff; border-right: 0; padding-top: 5px; display: flex; flex-direction: column; }
.comp-search { height: 20px; display: flex; align-items: center; padding-left: 2px; }
.search-input { width: 141px; height: 20px; border: 1px solid #a9a9a9; border-width: 1px 2px 2px 1px; color: #a0a0a0; padding-left: 2px; line-height: 17px; font-size: 10.8px; }
.search-ic { width: 15px; height: 15px; margin-left: 3px; }
.comp-list { flex: 1; min-height: 0; margin-left: 1px; border: 1px solid #bdbdbd; border-width: 0 2px 2px; display: flex; background: #fff; }
.az-list { flex: 1; list-style: none; margin: 5px 0 0 28px; padding: 0; border-left: 1px dotted #888; height: 484px; }
.az-list li { height: 14.33px; display: flex; align-items: center; font: 9.2px/14px "DejaVu Sans Mono", monospace; position: relative; color: #222; }
.az-list li::before { content: ""; width: 9px; border-top: 1px dotted #888; flex: none; }
.gear { width: 12px; height: 12px; margin-right: 6px; }
.az-list .sel { background: linear-gradient(#2f66c4, #2f66c4) 8px 0 / 51px 100% no-repeat; color: #0b1c4d; }
.prop { width: 141px; margin-left: 7px; flex: none; padding-top: 2px; display: flex; flex-direction: column; height: 528px; background: #fff; }
.prop-tabs { height: 18px; border-bottom: 1px solid #d8d8d8; flex: none; }
.prop-tab { display: inline-block; height: 18px; padding: 0 4px 0 3px; background: #fff; border-right: 1px solid #d8d8d8; line-height: 16px; font-size: 10.8px; }
.prop-table { margin: 3px 0 0 2px; flex: 1; border-top: 1px solid #cfcfcf; background: #fff; }
.pr { height: 17.1px; display: flex; border-bottom: 2px solid #e5e5e5; }
.pr-head { height: 21px; }
.pn { width: 19px; flex: none; background: #f3f3f3; border-right: 1px solid #d0d0d0; text-align: center; font: 8.6px/15px "DejaVu Sans Mono", monospace; }
.pv { flex: 1; padding-left: 18px; font-size: 10.8px; line-height: 15px; white-space: nowrap; overflow: hidden; position: relative; }
.pv-head { padding-left: 63px; line-height: 19px; }
.blue { color: #0000ff; }
.gray { color: #8a8a8a; }
.pr-sel { border-bottom-color: #0078d7; }
.pr-sel .pn { background: #ffd58a; color: #5a1a6a; }
.pr-sel .pv { background: #0078d7; color: #fff; }
.pm-box { display: inline-block; width: 10px; height: 10px; border: 1px solid #8a8a8a; color: #222; font: 10px/8px "Liberation Sans", sans-serif; text-align: center; margin: 0 5px 0 -15px; vertical-align: -1px; }
.pv-group { padding-left: 18px; }
.pv-child { padding-left: 27px; }
.pv-child::before { content: ""; position: absolute; left: 7px; top: 0; bottom: -2px; border-left: 1px solid #bbb; }
.pv-child::after { content: ""; position: absolute; left: 7px; top: 7px; width: 15px; border-top: 1px solid #bbb; }
.pv-last::before { bottom: 7px; }

.sect { flex: 1; min-width: 0; display: flex; }
.sect-frame { width: 747px; background: linear-gradient(#b4cde8, #d4e3f3 31px); border-right: 1px solid #3f6a74; display: flex; flex-direction: column; padding-left: 5px; }
.sect-title { height: 12px; flex: none; overflow: hidden; font-size: 10.8px; line-height: 7px; color: #333; padding-left: 3px; }
.sect-tabs { height: 19px; flex: none; display: flex; padding-left: 0; }
.stab { width: 41px; background: #e9eff6; border: 1px solid #cfd8e2; border-bottom: 0; text-align: center; line-height: 20px; font-size: 10.8px; }
.stab-on { width: 45px; background: #fff; line-height: 15px; margin-top: -2px; height: 21px; }
.sect-panel { flex: 1; min-height: 0; width: 740px; background: #fff; display: flex; flex-direction: column; padding: 0 0 0 6px; }
.rebar-tools { height: 26px; flex: none; display: flex; align-items: center; padding-top: 1px; background: #f6f6f6; margin-left: -2px; padding-left: 4px; }
.grip { width: 2px; height: 14px; flex: none; background: repeating-linear-gradient(#999 0 2px, transparent 2px 4px); }
.rt { padding: 0 4px; margin-right: 1px; white-space: nowrap; line-height: 16px; font-size: 10.8px; }
.rt-first { margin-left: 3px; }
.rt-on { border: 1px solid #3a9ae0; background: #e6f3fb; height: 19px; line-height: 17px; padding: 0 4px; margin-left: 3px; }
.rebar-info { height: 27px; flex: none; display: flex; align-items: flex-start; padding-top: 2px; background: #f6f6f6; margin-left: -2px; padding-left: 4px; }
.rebar-info .grip { margin-top: 4px; }
.ri-label { margin: 2px 2px 0 4px; font-size: 10.8px; }
.ri-select { width: 121px; height: 21px; border: 1px solid #69a5dc; background: #fff; display: flex; align-items: center; justify-content: space-between; font-size: 10.8px; }
.ri-val { padding-left: 2px; font-family: "Liberation Sans", sans-serif; font-size: 11px; }
.ri-btn { width: 11px; height: 19px; background: #d8e7f5; display: flex; align-items: center; justify-content: center; }
.ri-btn .caret { margin: 0; }
.canvas { height: 452px; flex: none; width: 728px; border: 2px solid #ff0000; background: #000; }
.drawing { width: 724px; height: 448px; }
.grid-lines path { fill: none; stroke: #4a4a4a; stroke-width: 1; stroke-dasharray: 10 3 3 3; }
.origin { fill: #3d3d3d; font: 9px "Liberation Serif", serif; }
.outline { fill: none; stroke: #eaeaea; stroke-width: 2; }
.leader { fill: none; stroke: #bbb; stroke-width: 1; }
.dims path { fill: none; stroke: #22e522; stroke-width: 1.600; }
.rebars path { fill: none; stroke: #ff0000; stroke-width: 3.600; }
.dot-b circle { fill: #00008a; stroke: #0000ff; }
.dot-m circle { fill: #7a0090; stroke: #ff20ff; }
.dot-y circle { fill: #8a8a00; stroke: #f2f200; }
.dim-t { fill: #dedede; font: 18px "Liberation Serif", serif; }
.lbl-w { fill: #e6e6e6; font: 17.400px "Noto Sans CJK SC", sans-serif; }
.lbl-g { fill: #0bc40b; font: 15.400px "Liberation Mono", monospace; }
.sect-status { height: 14px; margin-top: 7px; flex: none; display: flex; align-items: center; background: #f8f8f8; margin-left: -6px; padding-left: 9px; border-top: 1px solid #e0e0e0; }
.ss-coord { width: 124px; font: 8.8px "DejaVu Sans Mono", monospace; flex: none; color: #333; }
.ss-msg { font-size: 10.4px; white-space: nowrap; }

.win-status {
  height: 20px;
  flex: none;
  display: grid;
  grid-template-columns: 132px 70px 87px 42px 819px 63px;
  gap: 2px;
  background: #f7f7f7;
  border-bottom: 0;
}
.st { border: 1px solid #e2e2e2; padding: 0 1px 0 2px; line-height: 18px; white-space: nowrap; overflow: hidden; font-size: 10.8px; background: #fdfdfd; }

.page-count {
  position: absolute;
  left: 664px;
  top: 667px;
  font: 15px/20px "Liberation Sans", sans-serif;
  color: #a2a2a2;
}

/* taskbars */
.taskbar { display: grid; align-items: stretch; color: #ddd; }
.tb-inner {
  height: 36px;
  flex: none;
  background: #04101a;
  grid-template-columns: 43px 308px 44px 44px 45px 42px 38px 38px 39px 39px 38px 38px 37px 38px 38px 78px 18px 22px 24px 18px 30px 22px 28px 68px 33px;
  font-size: 10px;
}
.tb-outer {
  height: 40px;
  flex: none;
  background: #000b12;
  grid-template-columns: 48px 344px 48px 50px 49px 43px 40px 40px 39px 38px 39px 39px 39px 37px 40px 38px 85px 20px 28px 23px 21px 32px 27px 30px 76px 40px;
  font-size: 11.500px;
}
.t-start { background: #000; display: flex; align-items: center; justify-content: center; }
.t-win { width: 15px; height: 15px; }
.tb-outer .t-win { width: 16px; height: 16px; }
.t-search { background: #333; display: flex; align-items: center; padding-left: 7px; color: #9c9c9c; }
.ring { width: 19px; height: 19px; border-radius: 50%; border: 2px solid #e6e6e6; flex: none; }
.t-ph { margin-left: 5px; font-size: 11.6px; }
.tb-outer .ring { width: 20px; height: 20px; margin-left: 3px; }
.tb-outer .t-ph { margin-left: 6px; font-size: 13.8px; }
.t-mic { width: 11px; height: 17px; margin-left: auto; margin-right: 13px; color: #999; }
.tb-outer .t-mic { margin-right: 15px; height: 20px; width: 12px; }
.tc { display: flex; align-items: center; justify-content: center; position: relative; }
.ai { width: 20px; height: 21px; }
.tb-outer .ai { width: 22px; height: 24px; }
.active { background: #333b40; }
.run::after, .active::after { content: ""; position: absolute; left: 4px; right: 4px; bottom: 0; height: 2px; background: #6ba8e6; }
.tb-inner .active::after { display: none; }
.tb-outer .active::after { left: 0; right: 0; }
.t-cpu { margin-left: 6px; display: flex; flex-direction: column; align-items: center; justify-content: center; line-height: 17px; color: #d6d6d6; }
.tb-outer .t-cpu { margin-left: 5px; line-height: 19px; font-size: 13px; }
.up { width: 8px; height: 8px; border: solid #e6e6e6; border-width: 1.500px 0 0 1.500px; transform: rotate(45deg); margin-top: 4px; }
.ci { width: 16px; height: 14px; }
.ci-kb { width: 22px; height: 16px; }
.tb-outer .ci-kb { width: 24px; height: 17px; }
.t-zh { font-size: 12px; color: #fff; }
.tb-outer .t-zh { font-size: 14px; }
.s-logo { width: 14px; height: 15px; background: #ee4c1d; color: #fff; border-radius: 3px; transform: rotate(-8deg); font: 700 13px/15px "Liberation Sans", sans-serif; text-align: center; }
.t-clock { display: flex; flex-direction: column; align-items: center; justify-content: center; line-height: 17px; color: #d2d2d2; }
.tb-outer .t-clock { font-size: 13.500px; line-height: 20px; }
.ci-note { width: 14px; height: 15px; }
.note-badge { position: absolute; left: 50%; top: 18px; margin-left: 2px; width: 14px; height: 14px; border-radius: 50%; background: #2a2a2a; border: 1px solid #888; color: #fff; font: 700 9px/12px "Liberation Sans", sans-serif; text-align: center; }
.tb-outer .note-badge { top: 19px; width: 17px; height: 17px; font-size: 11px; line-height: 15px; }
.tb-outer .ci-note { width: 17px; height: 18px; margin-top: -5px; }

/* floating IME */
.ime {
  position: absolute;
  left: 795px;
  top: 47px;
  width: 162px;
  height: 21px;
  background: #f2f6fb;
  border: 1px solid #cdd9e6;
  display: flex;
  align-items: center;
  z-index: 4;
}
.ime-s { position: absolute; left: -3px; top: -4px; width: 22px; height: 24px; background: #ef5a1f; border-radius: 4px; transform: rotate(-8deg); color: #fff; font: 700 20px/24px "Liberation Sans", sans-serif; text-align: center; }
.ime-zh { margin-left: 25px; font-size: 13px; font-weight: 700; color: #1e6fc4; }
.ime-dot { margin-left: 6px; color: #1e6fc4; font: 700 12px "Liberation Sans", sans-serif; width: 12px; }
.ime-i { width: 14px; height: 15px; margin-left: 7px; }

/* annotations */
.anno { position: absolute; left: 0; top: 0; width: 1366px; height: 768px; pointer-events: none; z-index: 5; }
.anno-lines rect, .anno-lines path { fill: none; stroke: #f00; stroke-width: 3; }
.anno-lines .anno-head { fill: #f00; }
.anno-t { fill: #f00; font: 700 16px "Noto Sans CJK SC", sans-serif; }
.anno-t1 { letter-spacing: 4.600px; }
.anno-t2 { letter-spacing: 4.700px; }
.anno-t3 { letter-spacing: 6.800px; }
```
